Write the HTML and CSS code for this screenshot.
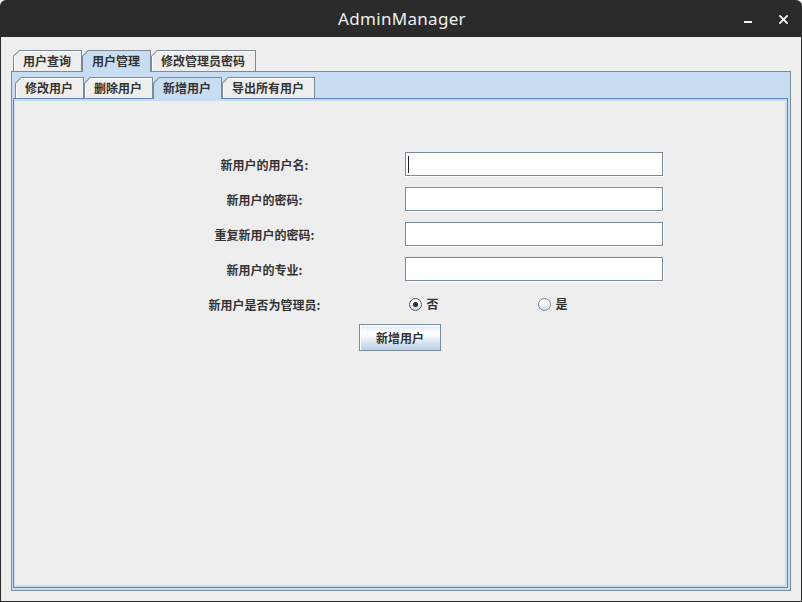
FILE: index.html
```html
<!DOCTYPE html>
<html lang="zh">
<head>
<meta charset="utf-8">
<title>AdminManager</title>
<link rel="stylesheet" href="styles.css">
</head>
<body>
<div class="window">
  <div class="titlebar">
    <div class="tb-side"></div>
    <div class="title">AdminManager</div>
    <div class="tb-side tb-buttons">
      <svg class="wm-btn" width="8" height="8" viewBox="0 0 8 8"><rect x="0" y="6" width="8" height="2" fill="#f2f2f2"/></svg>
      <svg class="wm-btn" width="9" height="9" viewBox="0 0 9 9"><path d="M1 1 L8 8 M8 1 L1 8" stroke="#f2f2f2" stroke-width="1.8" stroke-linecap="square"/></svg>
    </div>
  </div>
  <div class="frame">
    <div class="tabpane outer-pane">
      <div class="tabrow">
        <div class="tab"><div class="tab-face">用户查询</div></div>
        <div class="tab selected"><div class="tab-face">用户管理</div></div>
        <div class="tab"><div class="tab-face">修改管理员密码</div></div>
      </div>
      <div class="tabcontent outer-content">
        <div class="tabpane inner-pane">
          <div class="tabrow">
            <div class="tab"><div class="tab-face">修改用户</div></div>
            <div class="tab"><div class="tab-face">删除用户</div></div>
            <div class="tab selected"><div class="tab-face">新增用户</div></div>
            <div class="tab"><div class="tab-face">导出所有用户</div></div>
          </div>
          <div class="tabcontent inner-content">
            <div class="panel">
              <div class="form-grid">
                <div class="label">新用户的用户名:</div>
                <div class="field"><span class="caret"></span></div>
                <div class="label">新用户的密码:</div>
                <div class="field"></div>
                <div class="label">重复新用户的密码:</div>
                <div class="field"></div>
                <div class="label">新用户的专业:</div>
                <div class="field"></div>
                <div class="label">新用户是否为管理员:</div>
                <div class="radio-group">
                  <div class="radio-item"><span class="radio checked"></span><span class="radio-text">否</span></div>
                  <div class="radio-item"><span class="radio"></span><span class="radio-text">是</span></div>
                </div>
              </div>
              <div class="button">新增用户</div>
            </div>
          </div>
        </div>
      </div>
    </div>
  </div>
</div>
</body>
</html>
```

FILE: styles.css
```css
* { box-sizing: border-box; }

html, body {
  margin: 0;
  padding: 0;
  background: #f4f4f4;
}

body {
  width: 802px;
  height: 602px;
  overflow: hidden;
  font-family: "Noto Sans CJK SC", "Noto Sans", sans-serif;
  font-size: 12px;
  font-weight: bold;
  color: #333333;
}

.window {
  width: 802px;
  height: 602px;
  display: flex;
  flex-direction: column;
}

.titlebar {
  height: 37px;
  flex: none;
  background: #2b2b2b;
  border-radius: 6px 6px 0 0;
  display: grid;
  grid-template-columns: 1fr auto 1fr;
  align-items: center;
}

.title {
  font-family: "Noto Sans", sans-serif;
  font-weight: normal;
  font-size: 17px;
  letter-spacing: 0.3px;
  color: #f0f0f0;
  line-height: 37px;
  padding-left: 2px;
}

.tb-buttons {
  display: flex;
  justify-content: flex-end;
  align-items: center;
  gap: 27px;
  padding-right: 14px;
  padding-top: 1px;
}

.wm-btn { display: block; }

.frame {
  flex: 1;
  background: #eeeeee;
  border-left: 1px solid #2b2b2b;
  border-right: 1px solid #2b2b2b;
  border-bottom: 1px solid #2b2b2b;
  padding: 13px 10px 10px 10px;
  display: flex;
  flex-direction: column;
}

.tabpane {
  flex: 1;
  display: flex;
  flex-direction: column;
}

.tabrow {
  height: 21px;
  flex: none;
  display: flex;
  align-items: flex-end;
  padding-left: 2px;
}

.tab {
  position: relative;
  height: 21px;
  background: #7a8a99;
  padding: 1px 1px 0 1px;
  clip-path: polygon(0 6px, 6px 0, 100% 0, 100% 100%, 0 100%);
}

.tab-face {
  height: 100%;
  background: #eeeeee;
  clip-path: polygon(0 5.4px, 5.4px 0, 100% 0, 100% 100%, 0 100%);
  box-shadow: inset 1px 1px 0 #ffffff;
  padding: 0 10px 0 9px;
  line-height: 19px;
  white-space: nowrap;
  color: #333333;
}

.tab.selected {
  z-index: 1;
  height: 22px;
  margin-bottom: -1px;
}

.tab.selected .tab-face {
  background: #c8ddf2;
  box-shadow: none;
}

.tabcontent {
  flex: 1;
  display: flex;
  flex-direction: column;
  background: #c8ddf2;
}

.outer-content {
  border: 1px solid #7a8a99;
  padding: 5px 2px 2px 1px;
}

.inner-content {
  border: 1px solid #6382bf;
  padding: 2px 2px 2px 1px;
}

.panel {
  flex: 1;
  background: #eeeeee;
  display: flex;
  flex-direction: column;
  align-items: center;
  padding-top: 51px;
}

.form-grid {
  display: grid;
  grid-template-columns: 250px 258px;
  grid-auto-rows: 24px;
  column-gap: 15px;
  row-gap: 11px;
  margin-left: 2px;
}

.label {
  display: flex;
  align-items: center;
  justify-content: center;
  white-space: nowrap;
}

.field {
  background: #ffffff;
  border: 1px solid #7a8a99;
  box-shadow: 1px 1px 0 #ffffff;
  display: flex;
  align-items: center;
  padding-left: 2px;
}

.caret {
  width: 1px;
  height: 17px;
  background: #222222;
}

.radio-group {
  display: grid;
  grid-template-columns: 1fr 1fr;
  align-items: center;
}

.radio-item {
  display: flex;
  align-items: center;
  gap: 5px;
  padding-left: 4px;
}

.radio {
  width: 13px;
  height: 13px;
  border-radius: 50%;
  border: 1px solid #7a8a99;
  background: linear-gradient(#f4f8fc, #ffffff 35%, #c3d6ea);
  display: flex;
  align-items: center;
  justify-content: center;
}

.radio.checked {
  border-color: #555a60;
}

.radio.checked::after {
  content: "";
  width: 5px;
  height: 5px;
  border-radius: 50%;
  background: #2a2a2a;
}

.radio-text {
  line-height: 16px;
}

.button {
  margin-top: 8px;
  width: 82px;
  height: 27px;
  border: 1px solid #7a8a99;
  box-shadow: inset 1px 1px 0 #ffffff;
  background: linear-gradient(#dde8f3 0%, #ffffff 30%, #f4f8fc 45%, #b8cfe5 100%);
  display: flex;
  align-items: center;
  justify-content: center;
  color: #333333;
}
```
